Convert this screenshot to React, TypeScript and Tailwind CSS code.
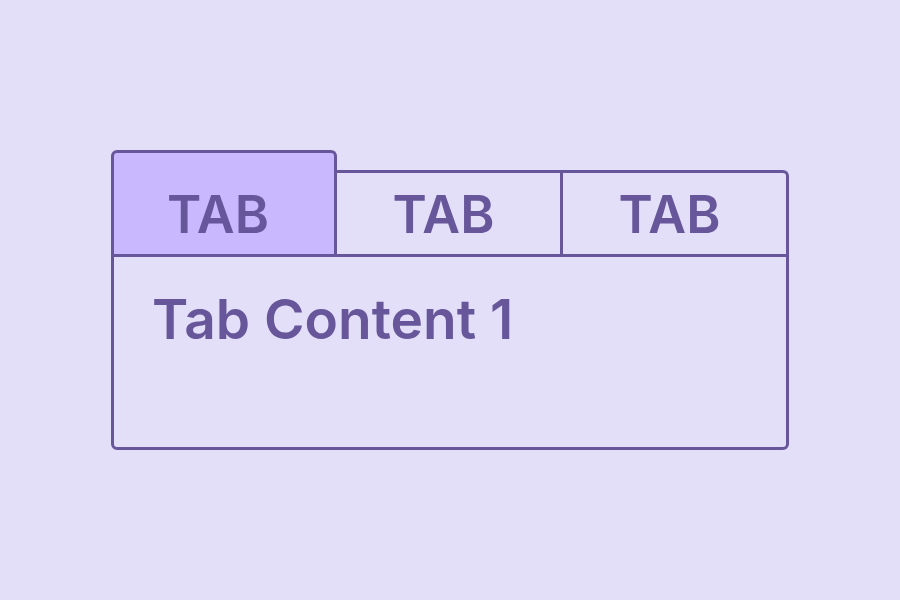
import React, { useState } from 'react';

const tabs = ['TAB', 'TAB', 'TAB'];

const App: React.FC = () => {
  const [active, setActive] = useState<number>(0);

  return (
    <div
      className="w-[900px] h-[600px] bg-[#e3dff8] flex items-center justify-center text-[#67579a]"
      style={{ fontFamily: 'Inter, "Noto Sans", sans-serif' }}
    >
      <div className="w-[678px] flex flex-col">
        <div className="flex items-end">
          {tabs.map((label, i) => {
            const isActive = i === active;
            return (
              <button
                key={i}
                onClick={() => setActive(i)}
                className={
                  isActive
                    ? 'w-[226px] h-[104px] pt-[22px] pr-[12px] bg-[#c9b8fd] border-[3px] border-b-0 border-[#67579a] rounded-t-[6px] flex items-center justify-center text-[52px] font-semibold leading-none'
                    : i === tabs.length - 1
                      ? 'w-[226px] h-[84px] pt-[2px] pr-[10px] border-t-[3px] border-r-[3px] border-[#67579a] rounded-tr-[6px] flex items-center justify-center text-[52px] font-semibold leading-none'
                      : 'w-[226px] h-[84px] pt-[2px] pr-[10px] border-t-[3px] border-r-[3px] border-[#67579a] flex items-center justify-center text-[52px] font-semibold leading-none'
                }
              >
                {label}
              </button>
            );
          })}
        </div>
        <div className="h-[196px] border-[3px] border-[#67579a] rounded-b-[6px] pl-[38px] pt-[35px]">
          <p className="text-[55px] font-semibold leading-none">Tab Content {active + 1}</p>
        </div>
      </div>
    </div>
  );
};

export default App;
